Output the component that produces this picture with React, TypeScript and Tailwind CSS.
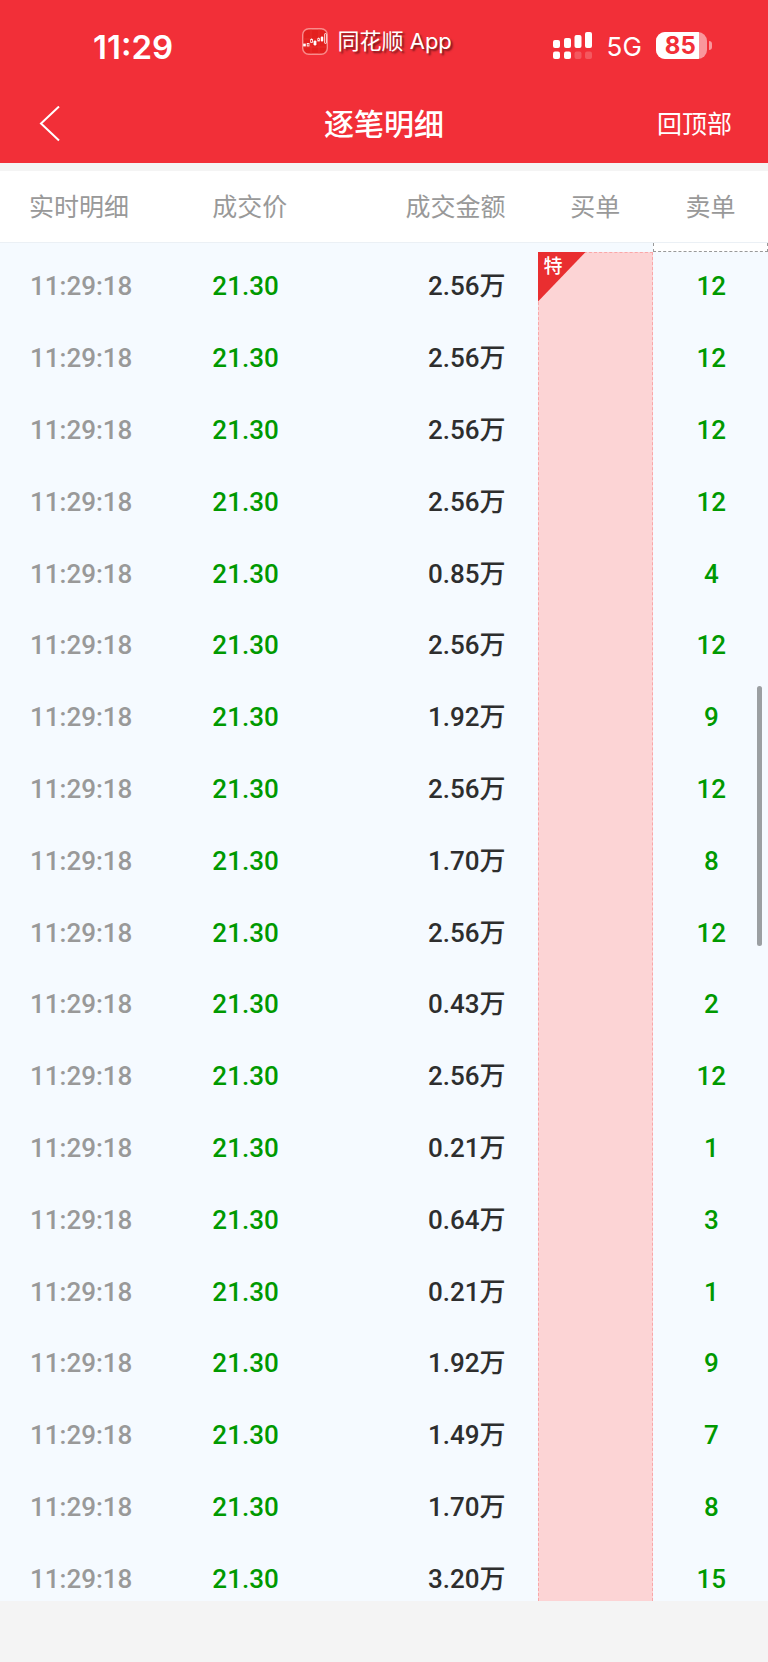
import React from 'react';

interface Trade {
  time: string;
  price: string;
  amount: string;
  sell: number;
}

const SELLS: [string, number][] = [
  ['2.56', 12],
  ['2.56', 12],
  ['2.56', 12],
  ['2.56', 12],
  ['0.85', 4],
  ['2.56', 12],
  ['1.92', 9],
  ['2.56', 12],
  ['1.70', 8],
  ['2.56', 12],
  ['0.43', 2],
  ['2.56', 12],
  ['0.21', 1],
  ['0.64', 3],
  ['0.21', 1],
  ['1.92', 9],
  ['1.49', 7],
  ['1.70', 8],
  ['3.20', 15],
];

const TRADES: Trade[] = SELLS.map(([amount, sell]) => ({
  time: '11:29:18',
  price: '21.30',
  amount: `${amount}万`,
  sell,
}));

const AppLogo: React.FC = () => (
  <svg width="26" height="27" viewBox="0 0 26 27" aria-hidden="true">
    <rect x="0.7" y="0.7" width="24.6" height="25.6" rx="6" fill="#e3201f" stroke="#f98c8c" strokeWidth="1.4" />
    <path d="M1 11H25M1 19H25M9 1V26M17 1V26" stroke="#ef3a38" strokeWidth="0.5" />
    <g fill="#fff">
      <rect x="1.2" y="15.6" width="2.6" height="2.8" />
      <rect x="11.6" y="13" width="2.8" height="4" />
      <rect x="18.8" y="9" width="2.4" height="4" />
    </g>
    <g fill="none" stroke="#fff" strokeWidth="0.8">
      <rect x="5.2" y="15.4" width="1.8" height="2.6" />
      <rect x="8.7" y="11.4" width="1.8" height="3" />
      <rect x="15.8" y="10.6" width="1.6" height="2.4" />
      <rect x="22.6" y="5.6" width="1.8" height="9.8" rx="0.5" />
      <path d="M9.6 10.4V11.4M13 12V18M16.6 9.6V10.6M20 8V14" />
    </g>
  </svg>
);

const Signal: React.FC = () => (
  <svg width="40" height="27" viewBox="0 0 40 27" fill="#fff" aria-hidden="true">
    <rect x="0" y="8" width="7" height="8" rx="2" />
    <rect x="11" y="6" width="7" height="10" rx="2" />
    <rect x="21.5" y="3" width="7" height="13" rx="2" />
    <rect x="32" y="0" width="7" height="16" rx="2" />
    <rect x="0" y="19.5" width="7" height="7.5" rx="2" />
    <rect x="11" y="19.5" width="7" height="7.5" rx="2" />
    <rect x="21.5" y="19.5" width="7" height="7.5" rx="2" opacity="0.2" />
    <rect x="32" y="19.5" width="7" height="7.5" rx="2" opacity="0.2" />
  </svg>
);

const Battery: React.FC = () => (
  <div className="flex items-center gap-[2px]">
    <div className="flex h-[27px] w-[51px] overflow-hidden rounded-[9px] bg-white/50">
      <span className="w-[43px] bg-white pl-[9px] text-[24px] leading-[27px] font-bold text-[#f22f38]">85</span>
    </div>
    <span className="h-[9px] w-[3px] rounded-r-full bg-white/50" />
  </div>
);

const StatusBar: React.FC = () => (
  <div className="grid h-[92px] grid-cols-[39%_31%_30%] items-center font-[Inter,'Noto_Sans_CJK_SC',sans-serif]">
    <span className="pt-[2px] pl-[93px] text-[33px] leading-[40px] font-semibold">11:29</span>
    <div className="flex items-center gap-[10px] pb-[10px] pl-[2px] text-[22px] leading-[30px]">
      <AppLogo />
      <span className="[text-shadow:2px_2px_2px_rgba(0,0,0,0.5)]">同花顺 App</span>
    </div>
    <div className="flex items-center gap-[14px] pb-[2px] pl-[15px]">
      <Signal />
      <span className="pt-[2px] text-[26px] leading-[27px]">5G</span>
      <Battery />
    </div>
  </div>
);

const NavBar: React.FC = () => (
  <nav className="grid h-[71px] grid-cols-3 items-center px-9 pb-2">
    <button type="button" aria-label="返回" className="justify-self-start pl-[3px]">
      <svg width="22" height="36" viewBox="0 0 22 36" fill="none" stroke="#fff" strokeWidth="2">
        <path d="M20 0.5L2 17.5L20 34.5" />
      </svg>
    </button>
    <h1 className="pt-[2px] text-center text-[30px] leading-[40px] font-medium">逐笔明细</h1>
    <button type="button" className="justify-self-end pt-[2px] text-[25px] leading-[40px]">
      回顶部
    </button>
  </nav>
);

const TradeTable: React.FC = () => (
  <table className="w-full table-fixed border-separate border-spacing-0 bg-[#f5faff]">
    <colgroup>
      <col className="w-[27%]" />
      <col className="w-[19%]" />
      <col className="w-[24%]" />
      <col className="w-[15%]" />
      <col className="w-[15%]" />
    </colgroup>
    <thead>
      <tr className="h-[72px] bg-white text-[25px] text-[#999] [&>th]:border-b [&>th]:border-[#ebf0f5] [&>th]:p-0 [&>th]:pt-[2px] [&>th]:font-normal">
        <th scope="col" className="text-left"><span className="pl-[29px]">实时明细</span></th>
        <th scope="col" className="text-left"><span className="pl-[5px]">成交价</span></th>
        <th scope="col" className="text-right"><span className="pr-[32px]">成交金额</span></th>
        <th scope="col">买单</th>
        <th scope="col">卖单</th>
      </tr>
    </thead>
    <tbody>
      {/* tail of the previous order, scrolled under the header */}
      <tr className="h-[9px]">
        <td colSpan={4} className="p-0" />
        <td className="border border-t-0 border-dashed border-[#999] bg-white p-0" />
      </tr>
    </tbody>
    <tbody className="text-[26px] leading-[40px] font-medium">
      {TRADES.map((trade, i) => (
        <tr key={i} className="h-[72px] align-top nth-[5n]:h-[71px] last:h-[56px] [&>td]:pt-[14px]">
          <td className="pl-[30px] text-[#999]">{trade.time}</td>
          <td className="pl-[5px] text-[#009900]">{trade.price}</td>
          <td className="pr-[32px] text-right text-[#2e2e2e]">{trade.amount}</td>
          {i === 0 && (
            <td
              rowSpan={TRADES.length}
              className="relative border border-b-0 border-dashed border-[#faa7a9] bg-[#fcd4d5]"
            >
              <div className="absolute -top-px -left-px h-[50px] w-[48px] bg-[#e92e30] [clip-path:polygon(0_0,100%_0,0_100%)]">
                <span className="block pt-[3px] pl-[6px] text-[19px] leading-6 text-white">特</span>
              </div>
            </td>
          )}
          <td className="pl-[2px] text-center text-[#009900]">{trade.sell}</td>
        </tr>
      ))}
    </tbody>
  </table>
);

export default function App() {
  return (
    <div className="bg-[#f4f4f4] pb-[61px] font-[Roboto,'Noto_Sans_CJK_SC',sans-serif]">
      <header className="bg-[#f22f38] text-white">
        <StatusBar />
        <NavBar />
      </header>
      <main className="relative mt-2">
        <TradeTable />
        {/* Scroll indicator */}
        <div className="absolute top-[515px] right-[6px] h-[260px] w-[5px] rounded-full bg-[#9b9fa2]" />
      </main>
    </div>
  );
}
